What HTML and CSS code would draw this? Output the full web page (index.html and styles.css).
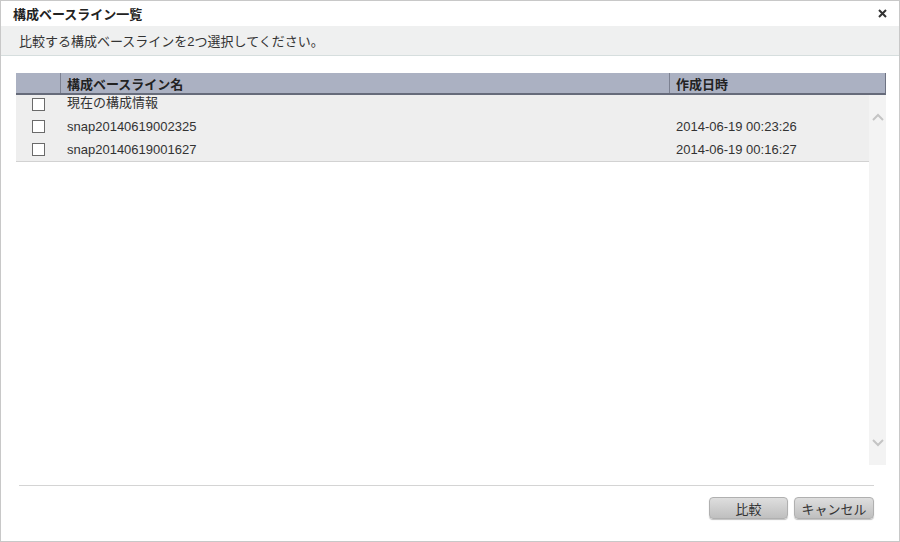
FILE: index.html
```html
<!DOCTYPE html>
<html lang="ja">
<head>
    <meta charset="UTF-8">
    <meta name="viewport" content="width=device-width, initial-scale=1.0">
    <title>構成ベースライン一覧</title>
    <link rel="stylesheet" href="styles.css">
</head>
<body>
    <div class="dialog">
        <div class="titlebar">
            <span class="title">構成ベースライン一覧</span>
            <span class="close">
                <svg width="9" height="9" viewBox="0 0 9 9"><path d="M1 1 L8 8 M8 1 L1 8" stroke="#333" stroke-width="2"/></svg>
            </span>
        </div>
        <div class="message">比較する構成ベースラインを2つ選択してください。</div>

        <div class="content">
            <div class="grid">
                <div class="grid-head">
                    <div class="col-check"></div>
                    <div class="col-name">構成ベースライン名</div>
                    <div class="col-date">作成日時</div>
                    <div class="col-scroll"></div>
                </div>
                <div class="grid-body">
                    <div class="rows">
                        <div class="row first">
                            <div class="col-check"><span class="checkbox"></span></div>
                            <div class="col-name">現在の構成情報</div>
                            <div class="col-date"></div>
                        </div>
                        <div class="row">
                            <div class="col-check"><span class="checkbox"></span></div>
                            <div class="col-name">snap20140619002325</div>
                            <div class="col-date">2014-06-19 00:23:26</div>
                        </div>
                        <div class="row last">
                            <div class="col-check"><span class="checkbox"></span></div>
                            <div class="col-name">snap20140619001627</div>
                            <div class="col-date">2014-06-19 00:16:27</div>
                        </div>
                    </div>
                    <div class="scrollbar">
                        <svg width="12" height="8" viewBox="0 0 12 8"><path d="M1 7 L6 2 L11 7" fill="none" stroke="#c4c4c4" stroke-width="2"/></svg>
                        <svg width="12" height="8" viewBox="0 0 12 8"><path d="M1 1 L6 6 L11 1" fill="none" stroke="#c4c4c4" stroke-width="2"/></svg>
                    </div>
                </div>
            </div>
        </div>

        <div class="footer">
            <button class="btn btn-compare">比較</button>
            <button class="btn btn-cancel">キャンセル</button>
        </div>
    </div>
</body>
</html>
```

FILE: styles.css
```css
body {
    margin: 0;
    padding: 0;
    font-family: "Liberation Sans", "Noto Sans CJK JP", sans-serif;
    font-size: 13px;
    color: #333;
    background-color: #fff;
}

.dialog {
    width: 900px;
    height: 542px;
    box-sizing: border-box;
    border: 1px solid #c8c8c8;
    display: flex;
    flex-direction: column;
    background-color: #fff;
}

.titlebar {
    height: 25px;
    display: flex;
    justify-content: space-between;
    align-items: center;
    padding: 0 12px 0 12px;
}

.title {
    font-weight: bold;
    color: #222;
    font-size: 13px;
}

.close {
    display: flex;
    align-items: center;
    margin-top: -1px;
}

.message {
    height: 30px;
    box-sizing: border-box;
    background-color: #eff0f0;
    border-bottom: 1px solid #d6dede;
    padding-left: 18px;
    display: flex;
    align-items: center;
    color: #333;
}

.content {
    padding: 17px 13px 0 15px;
}

.grid-head {
    display: flex;
    height: 22px;
    box-sizing: border-box;
    background-color: #abb1c2;
    border-bottom: 2px solid #666b7a;
    border-right: 1px solid #6e7383;
    font-weight: bold;
    color: #222;
}

.grid-head > div {
    display: flex;
    align-items: center;
}

.col-check {
    width: 44px;
    flex: none;
    display: flex;
    justify-content: center;
    align-items: center;
}

.col-name {
    width: 609px;
    flex: none;
    box-sizing: border-box;
    padding-left: 7px;
}

.col-date {
    width: 200px;
    flex: none;
    box-sizing: border-box;
    padding-left: 7px;
}

.col-scroll {
    flex: 1;
}

.grid-head .col-name,
.grid-head .col-date {
    border-left: 1px solid #7c8191;
    padding-left: 6px;
}

.grid-body {
    display: flex;
    height: 370px;
}

.rows {
    width: 853px;
}

.row {
    display: flex;
    align-items: center;
    height: 23px;
    background-color: #eeeeee;
}

.row.first {
    height: 20px;
    align-items: flex-start;
}

.row.first .col-name {
    line-height: 16px;
}

.row.last {
    border-bottom: 1px solid #d2d2d2;
}

.checkbox {
    display: block;
    width: 11px;
    height: 11px;
    border: 1px solid #6a6a6a;
    background-color: #fff;
}

.row.first .checkbox {
    margin-top: 3px;
}

.scrollbar {
    width: 17px;
    background-color: #f3f3f3;
    display: flex;
    flex-direction: column;
    justify-content: space-between;
    align-items: center;
    padding: 18px 0 18px 0;
    box-sizing: border-box;
}

.footer {
    margin: 20px 25px 0 18px;
    border-top: 1px solid #d4d4d4;
    padding-top: 11px;
    display: flex;
    justify-content: flex-end;
    gap: 6px;
}

.btn {
    width: 80px;
    height: 22px;
    font-family: "Liberation Sans", "Noto Sans CJK JP", sans-serif;
    font-size: 13px;
    color: #333;
    border: 1px solid #b0b0b0;
    border-radius: 4px;
    background: linear-gradient(#dedede, #bfbfbf);
    box-shadow: 0 1px 1px rgba(0, 0, 0, 0.25);
    padding: 0;
    cursor: pointer;
}

.btn-compare {
    width: 79px;
}
```
